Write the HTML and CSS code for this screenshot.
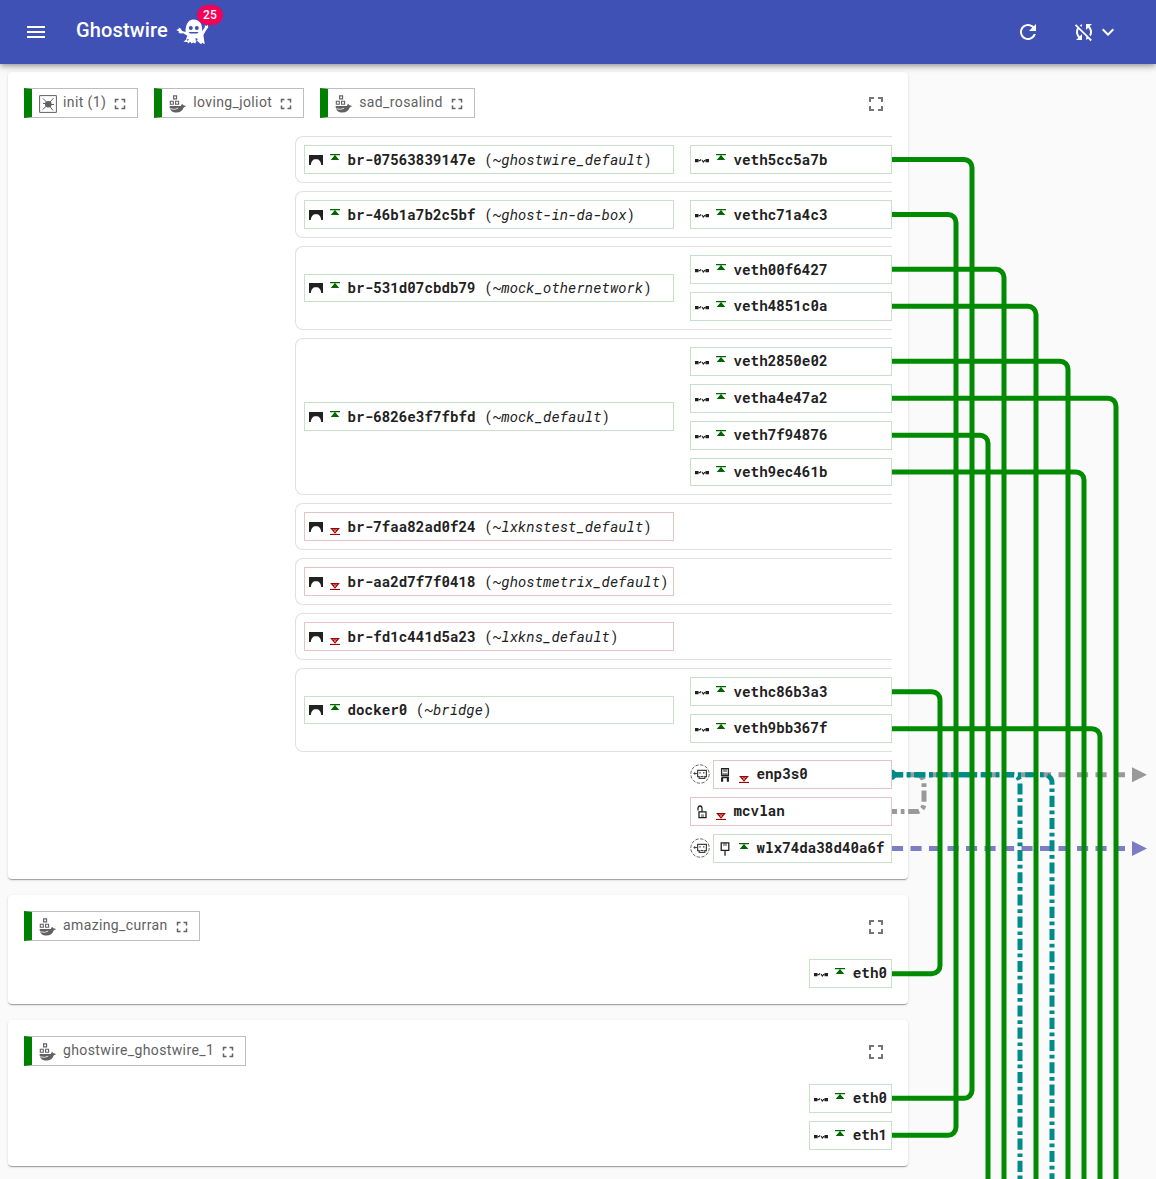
FILE: index.html
```
<!DOCTYPE html>
<html lang="en">
<head>
<meta charset="utf-8">
<title>Ghostwire</title>
<link rel="stylesheet" href="styles.css">
<script src="app.js" defer></script>
</head>
<body>
<svg class="defs" aria-hidden="true">
  <symbol id="i-full" viewBox="0 0 24 24"><path d="M7 14H5v5h5v-2H7v-3zm-2-4h2V7h3V5H5v5zm12 7h-3v2h5v-5h-2v3zM14 5v2h3v3h2V5h-5z"/></symbol>
  <symbol id="i-whale" viewBox="0 0 18 18"><path fill="none" stroke="currentColor" stroke-width="1.1" d="M4.6.9h3v3h-3zM1.3 6.3h3v3h-3zM6.6 6.3h3v3h-3z"/><path d="M.6 11h11.200l1.200-2.200 1.500 1.500 2.700.6-2.500 1.500c-1.200 3.400-3.600 5.200-7.200 5.200C3.500 17.600.6 15.500.6 11z"/><path fill="none" stroke="#fff" stroke-width=".8" d="M1.200 13.700q4.500 1.600 8-.5"/></symbol>
  <symbol id="i-init" viewBox="0 0 18 18"><path fill="none" stroke="currentColor" stroke-width="1" d="M.6.600h16.800v16.800H.6zM4 3.500l4 4M14.500 3.200L11 7M3.500 14.700L7.500 11M10.500 11l3.500 4.500M12 9.500h3M4 8.500h3"/><circle cx="9.300" cy="9.200" r="3.300"/></symbol>
  <symbol id="i-bridge" viewBox="0 0 14 10"><path d="M0 0h14v10h-1.800c-.2-2-.7-3.200-1.600-4.300C9.800 4.700 8.800 4.300 7.500 4.300h-1c-1.300 0-2.300.4-3.100 1.400C2.500 6.800 2 8 1.800 10H0z"/></symbol>
  <symbol id="i-veth" viewBox="0 0 14 5"><path d="M0 1h3.500v3.300H0zM10.500 1H14v3.300h-3.500z"/><path fill="none" stroke="currentColor" stroke-width="1.100" d="M3.500 2.600h1.500L6 1.200M7 2l1.300 2 1.200-1.400h1"/></symbol>
  <symbol id="i-up" viewBox="0 0 10 6"><path d="M0 0h10v1.200H0zM5 1l4.300 5H.7z"/></symbol>
  <symbol id="i-down" viewBox="0 0 10 7"><path d="M0 5.900h10V7H0z"/><path fill="none" stroke="currentColor" stroke-width="1.200" d="M1.400.6h7.200L5 4.900zM3.500 2h3"/></symbol>
  <symbol id="i-nic" viewBox="0 0 10 14"><path fill="none" stroke="currentColor" stroke-width="1.300" d="M2.500 13.800V9.500M7.500 13.800V9.500M1.700 9.500h6.600v4.300M1.700 13.800V9.500M1.600.7h6.800v6.800H1.600z"/><path d="M3 1h4v3H3z" opacity=".5"/><path d="M2.500 5.500h5v1h-5z"/></symbol>
  <symbol id="i-wlan" viewBox="0 0 10 14"><path fill="none" stroke="currentColor" stroke-width="1.300" d="M1.200.8h7.600v7.500H1.200zM5 8.500v5.300"/><path d="M3 1h4v3H3z" opacity=".45"/></symbol>
  <symbol id="i-macvlan" viewBox="0 0 10 14"><path fill="none" stroke="currentColor" stroke-width="1.300" d="M1 5.500V3.300Q1 1 3 1t2 2.300v3.200M2 12.700V6.800h7v5.900z"/><path d="M4 9.300h3v3H4z" opacity=".45"/></symbol>
  <symbol id="i-phys" viewBox="0 0 20 20"><circle cx="10" cy="10" r="9.200" fill="none" stroke="currentColor" stroke-width=".8" stroke-dasharray="3.300 1.500"/><path fill="none" stroke="currentColor" stroke-width="1.200" d="M7.600 6.400h8.800v6.200h-1.600v1.700H9.200v-1.700H7.600zM5 9.500h2.500"/><path d="M3.200 9.500l2-1.700v3.400zM9.300 8.200h1.400v1.400H9.300zM13 8.200h1.400v1.400H13zM10.500 12h3v1h-3z"/></symbol>
</svg>

<header class="bar">
  <svg class="menu" viewBox="0 0 24 24"><path d="M3 18h18v-2H3v2zm0-5h18v-2H3v2zm0-7v2h18V6H3z"/></svg>
  <h1>Ghostwire</h1>
  <div class="logo">
    <svg class="ghost" viewBox="0 0 33 26"><path d="M17.500.6c5.300 0 8.500 3.700 8.500 8.500l.3 2.800 2.400-3.400.2-2.300 1.500.8 1.500-1.200.3 2.600-1.800 2.300-3 5.300 1.300 9.200-2.400-1.500-1.200 1.500-3-2.400-1.200-1.500-1.700 3.300-1.800-1.100-2 1-1-1.800-2.500 1.800-.3-1.500-4.200-.2 2.500-2 1.400-4-4-2.500-2.500.3-2.300-.8.500-1.400L.2 11l2.600-1-.2-1.400 2 1 1.600 2.500 3.300 1C9.500 6.300 11.800.6 17.500.6z"/><g fill="#3f51b5"><circle cx="14.800" cy="9" r="2"/><circle cx="20.800" cy="9" r="2"/><path d="M12.500 13h10.200l-1.500 1.600h-7.200zM19.500 19l2.500 1-2.200 2.200zM10.500 20.500l2.500-.5-1.200 2z"/></g></svg>
    <span class="badge">25</span>
  </div>
  <div class="tools">
    <svg class="tool" viewBox="0 0 24 24"><path d="M17.650 6.350C16.200 4.900 14.210 4 12 4c-4.420 0-7.990 3.580-7.990 8s3.570 8 7.990 8c3.730 0 6.840-2.550 7.730-6h-2.080c-.82 2.330-3.040 4-5.650 4-3.310 0-6-2.690-6-6s2.690-6 6-6c1.660 0 3.140.69 4.220 1.780L13 11h7V4l-2.350 2.350z"/></svg>
    <svg class="tool" viewBox="0 0 24 24"><path d="M10 6.350V4.260c-.8.210-1.550.54-2.230.96l1.460 1.460c.25-.12.5-.24.770-.33zm-7.140-.94l2.360 2.360C4.450 8.990 4 10.440 4 12c0 2.210.91 4.200 2.360 5.640L4 20h6v-6l-2.240 2.240C6.680 15.150 6 13.660 6 12c0-1 .25-1.940.68-2.770l8.080 8.080c-.25.130-.5.250-.77.340v2.090c.8-.21 1.550-.54 2.230-.96l2.360 2.360 1.270-1.270L4.140 4.140 2.860 5.410zM20 4h-6v6l2.240-2.240C17.320 8.850 18 10.340 18 12c0 1-.25 1.940-.68 2.770l1.460 1.460C19.550 15.010 20 13.560 20 12c0-2.210-.91-4.200-2.360-5.640L20 4z"/></svg>
    <svg class="tool arrow" viewBox="0 0 24 24"><path d="M7.410 8.590L12 13.170l4.590-4.580L18 10l-6 6-6-6z"/></svg>
  </div>
</header>

<main id="cards"></main>

<svg class="wires" width="264" height="1115" viewBox="892 64 264 1115">
  <g class="w grey">
    <path class="dashed" d="M892 774.700H1125"/>
    <path class="dashdot" d="M892 774.700H916A8 8 0 0 1 924 782.700V803.600A8 8 0 0 1 916 811.600H892"/>
    <path class="head" d="M1132 767.200L1147 774.700L1132 782.200z"/>
  </g>
  <g class="w violet">
    <path class="dashed" d="M892 848.500H1125"/>
    <path class="head" d="M1132 841L1147 848.500L1132 856z"/>
  </g>
  <g class="w teal">
    <path class="dashdot" d="M892 774.700H1012A8 8 0 0 1 1020 782.700V1190"/>
    <path class="dashdot" d="M892 774.700H1044A8 8 0 0 1 1052 782.700V1190"/>
    <path class="head" d="M892 769.700h1.500l3 3v4l-3 3H892z"/>
  </g>
  <g class="w green">
    <path d="M892 159.500H964A8 8 0 0 1 972 167.500V1090.300A8 8 0 0 1 964 1098.300H892"/>
    <path d="M892 214.500H948A8 8 0 0 1 956 222.500V1127.300A8 8 0 0 1 948 1135.300H892"/>
    <path d="M892 269.300H996A8 8 0 0 1 1004 277.300V1190"/>
    <path d="M892 306.300H1028A8 8 0 0 1 1036 314.300V1190"/>
    <path d="M892 361.200H1060A8 8 0 0 1 1068 369.200V1190"/>
    <path d="M892 398.200H1108A8 8 0 0 1 1116 406.200V1190"/>
    <path d="M892 435.200H980A8 8 0 0 1 988 443.200V1190"/>
    <path d="M892 472H1076A8 8 0 0 1 1084 480V1190"/>
    <path d="M892 691.700H932A8 8 0 0 1 940 699.700V965.700A8 8 0 0 1 932 973.700H892"/>
    <path d="M892 728.700H1092A8 8 0 0 1 1100 736.700V1190"/>
  </g>
</svg>
</body>
</html>
```
FILE: styles.css
```
* { box-sizing: border-box; }
body {
  margin: 0;
  height: 1179px;
  overflow: hidden;
  position: relative;
  background: #fafafa;
  color: #212121;
  font-family: Roboto, "Liberation Sans", sans-serif;
}
svg { display: block; fill: currentColor; flex: none; }
.defs { position: absolute; width: 0; height: 0; }

.bar {
  position: relative;
  height: 64px;
  display: flex;
  align-items: center;
  padding: 0 36px 0 24px;
  background: #3f51b5;
  color: #fff;
  box-shadow: 0 2px 4px -1px rgba(0,0,0,.2), 0 4px 5px rgba(0,0,0,.14), 0 1px 10px rgba(0,0,0,.12);
}
.menu { width: 24px; height: 24px; }
.bar h1 {
  margin: 0 0 4px 28px;
  font-size: 20px;
  line-height: 32px;
  font-weight: 500;
  letter-spacing: .15px;
}
.logo { position: relative; margin-left: 8px; }
.ghost { width: 33px; height: 26px; }
.badge {
  position: absolute;
  left: 21px;
  top: -14px;
  width: 26px;
  height: 20px;
  border-radius: 10px;
  background: #f50057;
  font-size: 12px;
  line-height: 20px;
  font-weight: 500;
  letter-spacing: .2px;
  text-align: center;
}
.tools { margin-left: auto; display: flex; }
.tool { width: 24px; height: 24px; }
.tool + .tool { margin-left: 32px; }
.tool + .arrow { margin-left: 0; }

main { display: flex; flex-direction: column; gap: 16px; padding: 8px; width: 916px; }
.card {
  padding: 16px;
  border-radius: 4px;
  background: #fff;
  box-shadow: 0 2px 1px -1px rgba(0,0,0,.2), 0 1px 1px rgba(0,0,0,.14), 0 1px 3px rgba(0,0,0,.12);
}
.head-row { display: flex; gap: 16px; align-items: center; height: 30px; margin-bottom: 18.300px; }
.chip {
  display: flex;
  align-items: center;
  height: 30px;
  padding: 0 8px 0 7px;
  border: 1px solid #bdbdbd;
  border-left: 8px solid #008000;
  color: #616161;
  font-size: 14px;
  letter-spacing: .38px;
}
.chip-icon { width: 18px; height: 18px; margin: 2px 6px 0 0; }
.chip-name { margin-top: -2px; line-height: 20px; }
.chip .full { width: 18px; height: 18px; margin: 2px 0 0 5px; }
.expand { width: 24px; height: 24px; margin: 2px 4px 0 auto; color: #757575; }

.nets { display: flex; flex-direction: column; align-items: flex-end; gap: 8px; }
.group {
  width: 597px;
  display: grid;
  grid-template-columns: 370px 202px;
  column-gap: 16px;
  align-items: center;
  padding: 8px 0 8px 8px;
  border: 1px solid #e0e0e0;
  border-right: 0;
  border-radius: 8px 0 0 8px;
}
.ports { display: flex; flex-direction: column; gap: 8px; }
.port { display: flex; align-items: center; gap: 3px; }
.wide { width: 202px; }
.phys { width: 20px; height: 20px; color: #424242; }
.nif {
  display: flex;
  align-items: center;
  height: 28.900px;
  padding: 0 4px;
  border: 1px solid #c8dfc8;
  background: #fff;
  white-space: pre;
  font: 14.240px/19px "Roboto Mono", "Liberation Mono", monospace;
}
.port .nif { flex: 1; }
.nif.off { border-color: #e4c4c4; }
.nif b { font-weight: 700; }
.label { margin-top: -1px; }
.kind { width: 14px; display: flex; justify-content: center; margin: 1px 7px 0 0; }
.k-bridge { width: 14px; height: 10px; }
.k-veth { width: 14px; height: 5px; margin-top: 1px; }
.k-nic, .k-wlan, .k-macvlan { width: 10px; height: 14px; }
.state { width: 10px; height: 6px; margin: 0 7.500px 5px 0; color: #006400; }
.off .state { height: 7px; margin: 10px 7.500px 0 0; color: #a00000; }

.wires { position: absolute; left: 892px; top: 64px; }
.w path { fill: none; stroke-width: 5; }
.w .dashed { stroke-dasharray: 11.100 7.400; }
.w .dashdot { stroke-dasharray: 11.100 3.700 3.700 3.700; }
.green path { stroke: #008b00; }
.grey path { stroke: #999; }
.violet path { stroke: #7d7dc6; }
.teal path { stroke: #008b8b; }
.w .head { stroke: none; }
.grey .head { fill: #999; }
.violet .head { fill: #7d7dc6; }
.teal .head { fill: #008b8b; }
```
FILE: app.js
```
const cards = [
  {
    chips: [["init", "init (1)"], ["whale", "loving_joliot"], ["whale", "sad_rosalind"]],
    groups: [
      ["br-07563839147e", "ghostwire_default", true, ["veth5cc5a7b"]],
      ["br-46b1a7b2c5bf", "ghost-in-da-box", true, ["vethc71a4c3"]],
      ["br-531d07cbdb79", "mock_othernetwork", true, ["veth00f6427", "veth4851c0a"]],
      ["br-6826e3f7fbfd", "mock_default", true, ["veth2850e02", "vetha4e47a2", "veth7f94876", "veth9ec461b"]],
      ["br-7faa82ad0f24", "lxknstest_default", false, []],
      ["br-aa2d7f7f0418", "ghostmetrix_default", false, []],
      ["br-fd1c441d5a23", "lxkns_default", false, []],
      ["docker0", "bridge", true, ["vethc86b3a3", "veth9bb367f"]]
    ],
    ports: [["nic", "enp3s0", false, true], ["macvlan", "mcvlan", false, false], ["wlan", "wlx74da38d40a6f", true, true]]
  },
  { chips: [["whale", "amazing_curran"]], groups: [], ports: [["veth", "eth0", true, false]] },
  { chips: [["whale", "ghostwire_ghostwire_1"]], groups: [], ports: [["veth", "eth0", true, false], ["veth", "eth1", true, false]] }
];

const icon = (name, cls) => `<svg class="${cls}"><use href="#i-${name}"/></svg>`;

const nif = (kind, name, up, alias) =>
  `<div class="nif ${up ? "" : "off"}"><span class="kind">${icon(kind, "k-" + kind)}</span>` +
  icon(up ? "up" : "down", "state") +
  `<span class="label"><b>${name}</b>${alias ? ` (~<i>${alias}</i>)` : ""}</span></div>`;

const chip = ([kind, name]) =>
  `<div class="chip">${icon(kind, "chip-icon")}<span class="chip-name">${name}</span>${icon("full", "full")}</div>`;

const group = ([name, alias, up, veths]) =>
  `<div class="group">${nif("bridge", name, up, alias)}` +
  `<div class="ports">${veths.map(v => nif("veth", v, true)).join("")}</div></div>`;

const port = wide => ([kind, name, up, physical]) =>
  `<div class="port ${wide ? "wide" : ""}">${physical ? icon("phys", "phys") : ""}${nif(kind, name, up)}</div>`;

document.getElementById("cards").innerHTML = cards.map(c =>
  `<section class="card"><div class="head-row">${c.chips.map(chip).join("")}${icon("full", "expand")}</div>` +
  `<div class="nets">${c.groups.map(group).join("")}${c.ports.map(port(c.groups.length > 0)).join("")}</div></section>`
).join("");
```
